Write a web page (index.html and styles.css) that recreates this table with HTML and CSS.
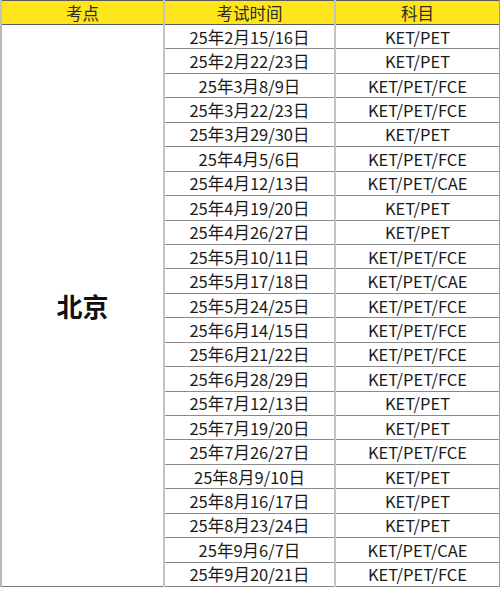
FILE: index.html
```html
<!DOCTYPE html>
<html lang="zh">
<head>
<meta charset="utf-8">
<link rel="stylesheet" href="styles.css">
</head>
<body>
<table class="schedule">
  <colgroup>
    <col class="c1"><col class="c2"><col class="c3">
  </colgroup>
  <thead>
    <tr class="head"><th>考点</th><th>考试时间</th><th>科目</th></tr>
  </thead>
  <tbody>
    <tr><td class="city" rowspan="23">北京</td><td>25年2月15/16日</td><td>KET/PET</td></tr>
    <tr><td>25年2月22/23日</td><td>KET/PET</td></tr>
    <tr><td>25年3月8/9日</td><td>KET/PET/FCE</td></tr>
    <tr><td>25年3月22/23日</td><td>KET/PET/FCE</td></tr>
    <tr><td>25年3月29/30日</td><td>KET/PET</td></tr>
    <tr><td>25年4月5/6日</td><td>KET/PET/FCE</td></tr>
    <tr><td>25年4月12/13日</td><td>KET/PET/CAE</td></tr>
    <tr><td>25年4月19/20日</td><td>KET/PET</td></tr>
    <tr><td>25年4月26/27日</td><td>KET/PET</td></tr>
    <tr><td>25年5月10/11日</td><td>KET/PET/FCE</td></tr>
    <tr><td>25年5月17/18日</td><td>KET/PET/CAE</td></tr>
    <tr><td>25年5月24/25日</td><td>KET/PET/FCE</td></tr>
    <tr><td>25年6月14/15日</td><td>KET/PET/FCE</td></tr>
    <tr><td>25年6月21/22日</td><td>KET/PET/FCE</td></tr>
    <tr><td>25年6月28/29日</td><td>KET/PET/FCE</td></tr>
    <tr><td>25年7月12/13日</td><td>KET/PET</td></tr>
    <tr><td>25年7月19/20日</td><td>KET/PET</td></tr>
    <tr><td>25年7月26/27日</td><td>KET/PET/FCE</td></tr>
    <tr><td>25年8月9/10日</td><td>KET/PET</td></tr>
    <tr><td>25年8月16/17日</td><td>KET/PET</td></tr>
    <tr><td>25年8月23/24日</td><td>KET/PET</td></tr>
    <tr><td>25年9月6/7日</td><td>KET/PET/CAE</td></tr>
    <tr><td>25年9月20/21日</td><td>KET/PET/FCE</td></tr>
  </tbody>
</table>
</body>
</html>
```
FILE: styles.css
```css
html, body {
  margin: 0;
  padding: 0;
  background: #ffffff;
}
body {
  font-family: "Noto Sans CJK SC", "Noto Sans", sans-serif;
  color: #1a1a1a;
}
.schedule {
  border-collapse: collapse;
  table-layout: fixed;
  width: 499px;
  font-size: 16.5px;
}
.c1 { width: 163px; }
.c2 { width: 171px; }
.c3 { width: 165px; }
.schedule th,
.schedule td {
  padding: 0;
  text-align: center;
  line-height: 22px;
  border-left: 2px solid #c4c4c4;
  border-right: 2px solid #c4c4c4;
  border-top: 1px solid #8a8a8a;
  border-bottom: 1px solid #8a8a8a;
  white-space: nowrap;
}
.schedule tbody tr { height: 24.45px; }
.schedule .head { height: 24px; }
.schedule th {
  background: #fee51c;
  font-weight: normal;
  color: #2b2b2b;
  border-top: 1px solid #5a5a5a;
  border-bottom: 1px solid #5a5a5a;
}
.schedule th:last-child,
.schedule td:last-child {
  border-right: 2px solid #9a9a9a;
}
.schedule .city {
  font-size: 26px;
  font-weight: bold;
  color: #111;
  border-left: 2px solid #b8b8b8;
  border-bottom: 1px solid #777;
}
```
